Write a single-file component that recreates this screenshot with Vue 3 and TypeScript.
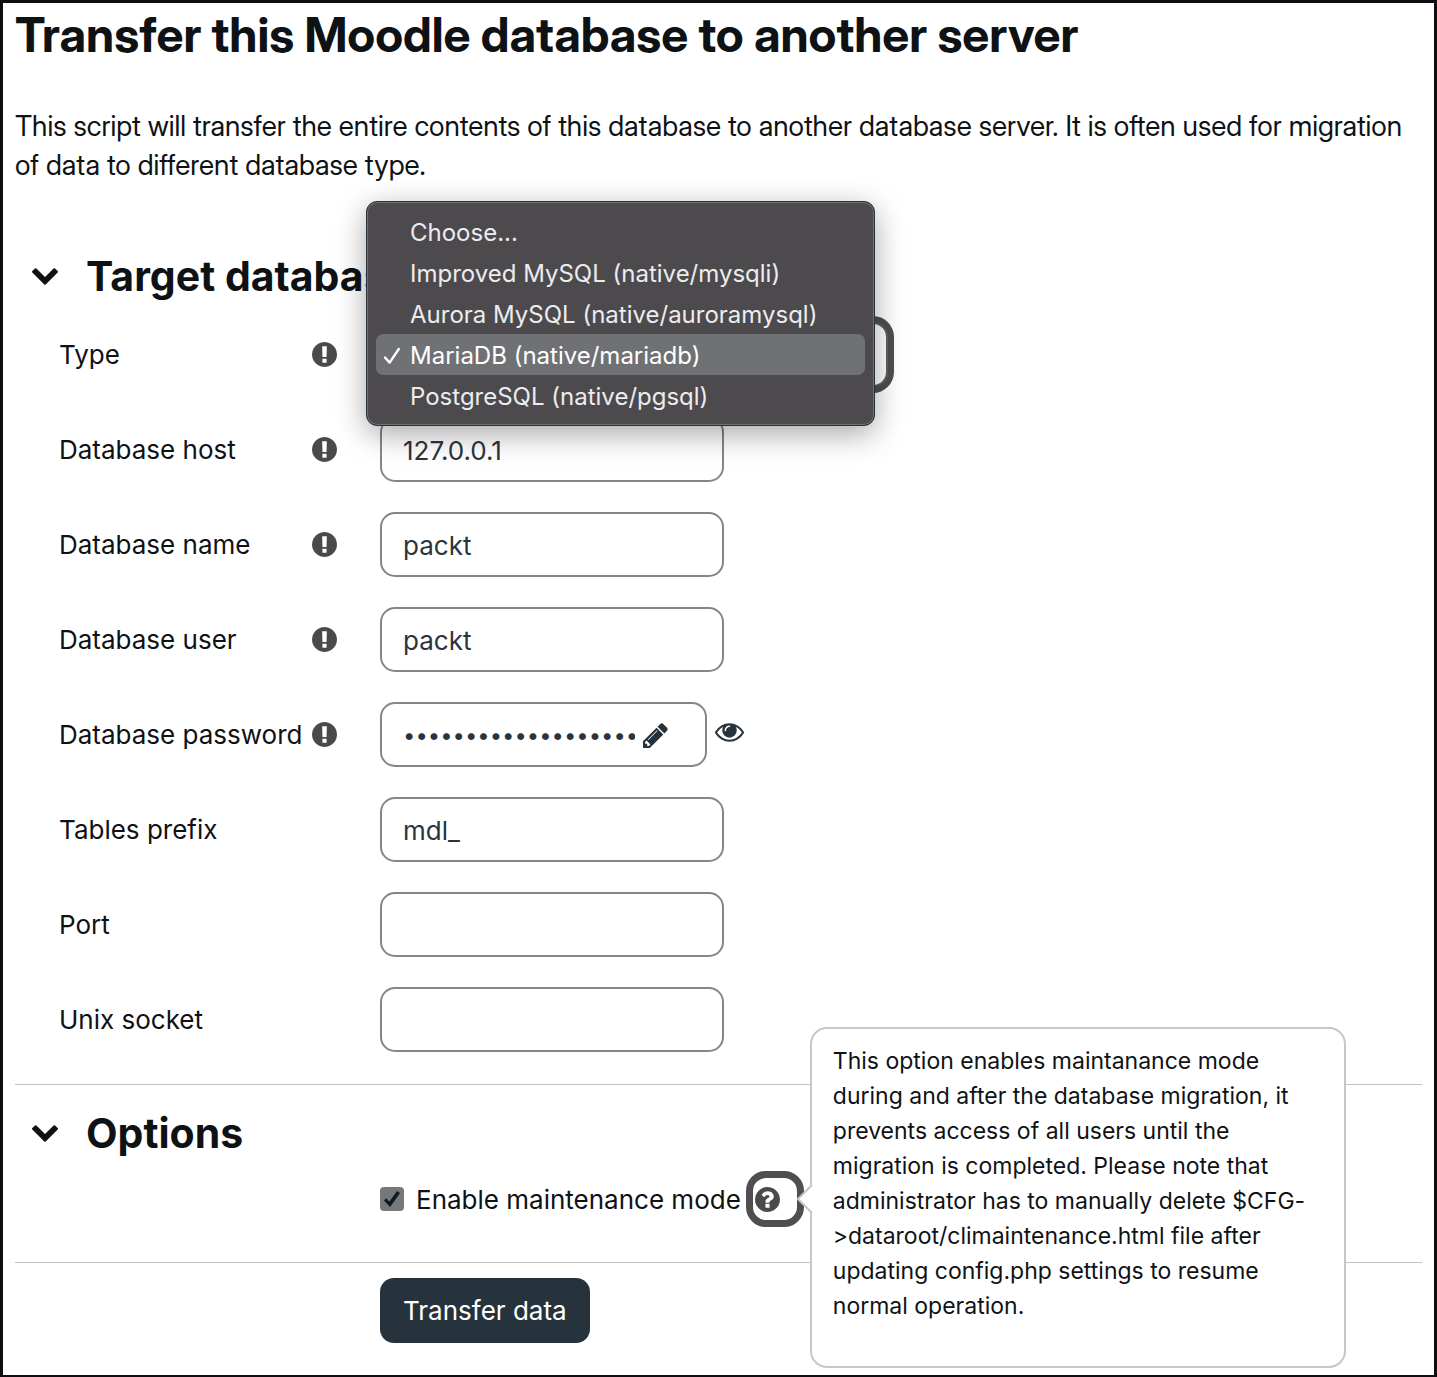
<script setup lang="ts">
import { ref } from 'vue'

interface Field {
  id: string
  label: string
  required: boolean
  kind: 'select' | 'text' | 'password'
}

const fields: Field[] = [
  { id: 'dbtype', label: 'Type', required: true, kind: 'select' },
  { id: 'dbhost', label: 'Database host', required: true, kind: 'text' },
  { id: 'dbname', label: 'Database name', required: true, kind: 'text' },
  { id: 'dbuser', label: 'Database user', required: true, kind: 'text' },
  { id: 'dbpass', label: 'Database password', required: true, kind: 'password' },
  { id: 'prefix', label: 'Tables prefix', required: false, kind: 'text' },
  { id: 'dbport', label: 'Port', required: false, kind: 'text' },
  { id: 'dbsocket', label: 'Unix socket', required: false, kind: 'text' },
]

const values = ref<Record<string, string>>({
  dbtype: 'mariadb',
  dbhost: '127.0.0.1',
  dbname: 'packt',
  dbuser: 'packt',
  dbpass: 'x'.repeat(19),
  prefix: 'mdl_',
  dbport: '',
  dbsocket: '',
})

const drivers = [
  { value: '', label: 'Choose...' },
  { value: 'mysqli', label: 'Improved MySQL (native/mysqli)' },
  { value: 'auroramysql', label: 'Aurora MySQL (native/auroramysql)' },
  { value: 'mariadb', label: 'MariaDB (native/mariadb)' },
  { value: 'pgsql', label: 'PostgreSQL (native/pgsql)' },
]

const maintenance = ref(true)
const targetOpen = ref(true)
const optionsOpen = ref(true)
const revealed = ref(false)
</script>

<template>
  <main class="page">
    <h1>Transfer this Moodle database to another server</h1>
    <p class="intro">
      This script will transfer the entire contents of this database to another database server. It is often used for
      migration of data to different database type.
    </p>

    <form @submit.prevent>
      <section class="section">
        <div class="section-head">
          <button type="button" class="toggle" aria-label="Target database" @click="targetOpen = !targetOpen">
            <svg viewBox="90 533 1612 1035" width="26" height="17">
              <path d="M1683 808l-742 741q-19 19-45 19t-45-19l-742-741q-19-19-19-45.5t19-45.5l166-165q19-19 45-19t45 19l531 531 531-531q19-19 45-19t45 19l166 165q19 19 19 45.5t-19 45.5z" />
            </svg>
          </button>
          <h2>Target database</h2>
        </div>

        <div v-show="targetOpen" class="rows">
          <div v-for="f in fields" :key="f.id" class="row">
            <div class="label-cell">
              <label :for="f.id">{{ f.label }}</label>
              <svg v-if="f.required" class="req" viewBox="128 128 1536 1536" width="25" height="25" role="img" aria-label="Required">
                <path d="M896 128q209 0 385.5 103t279.5 279.5 103 385.5-103 385.5-279.5 279.5-385.5 103-385.5-103-279.5-279.5-103-385.5 103-385.5 279.5-279.5 385.5-103zm128 1247v-190q0-14-9-23.5t-22-9.5h-192q-13 0-23 10t-10 23v190q0 13 10 23t23 10h192q13 0 22-9.5t9-23.5zm-2-344l18-621q0-12-10-18-10-8-24-8h-220q-14 0-24 8-10 6-10 18l17 621q0 10 10 17.5t24 7.5h185q14 0 23.5-7.5t10.5-17.5z" />
              </svg>
            </div>

            <div v-if="f.kind === 'select'" class="select-wrap">
              <select :id="f.id" v-model="values[f.id]" class="control select">
                <option v-for="d in drivers" :key="d.value" :value="d.value">{{ d.label }}</option>
              </select>
              <ul class="menu" role="listbox" aria-label="Type">
                <li
                  v-for="d in drivers"
                  :key="d.value"
                  class="menu-item"
                  :class="{ active: d.value === values.dbtype }"
                  role="option"
                  :aria-selected="d.value === values.dbtype"
                  @click="values.dbtype = d.value"
                >
                  <span class="tick">
                    <svg v-if="d.value === values.dbtype" viewBox="0 0 18 18" width="18" height="18">
                      <path d="M2 10.5L6.6 15.6L15.8 2" fill="none" stroke="#fff" stroke-width="2.4" stroke-linecap="round" stroke-linejoin="round" />
                    </svg>
                  </span>
                  {{ d.label }}
                </li>
              </ul>
            </div>

            <div v-else-if="f.kind === 'password'" class="pw-wrap">
              <div class="control pw-box">
                <input :id="f.id" v-model="values[f.id]" class="pw-input" :type="revealed ? 'text' : 'password'" />
                <button type="button" class="icon-btn" aria-label="Edit password">
                  <svg viewBox="128 128 1536 1536" width="25" height="25">
                    <path d="M491 1536l91-91-235-235-91 91v107h128v128h107zm523-928q0-22-22-22-10 0-17 7l-542 542q-7 7-7 17 0 22 22 22 10 0 17-7l542-542q7-7 7-17zm-54-192l416 416-832 832h-416v-416zm683 96q0 53-37 90l-166 166-416-416 166-165q36-38 90-38 53 0 91 38l235 234q37 39 37 91z" />
                  </svg>
                </button>
              </div>
              <button type="button" class="icon-btn eye" aria-label="Reveal" @click="revealed = !revealed">
                <svg viewBox="0 384 1792 1152" width="29" height="19">
                  <path d="M1664 960q-152-236-381-353 61 104 61 225 0 185-131.5 316.5t-316.5 131.5-316.5-131.5-131.5-316.5q0-121 61-225-229 117-381 353 133 205 333.5 326.5t434.5 121.5 434.5-121.5 333.5-326.5zm-720-384q0-20-14-34t-34-14q-125 0-214.5 89.5t-89.5 214.5q0 20 14 34t34 14 34-14 14-34q0-86 61-147t147-61q20 0 34-14t14-34zm848 384q0 34-20 69-140 230-376.5 368.5t-499.5 138.5-499.5-139-376.5-368q-20-35-20-69t20-69q140-229 376.5-368t499.5-139 499.5 139 376.5 368q20 35 20 69z" />
                </svg>
              </button>
            </div>

            <input v-else :id="f.id" v-model="values[f.id]" class="control text" type="text" />
          </div>
        </div>
      </section>

      <section class="section">
        <div class="section-head">
          <button type="button" class="toggle" aria-label="Options" @click="optionsOpen = !optionsOpen">
            <svg viewBox="90 533 1612 1035" width="26" height="17">
              <path d="M1683 808l-742 741q-19 19-45 19t-45-19l-742-741q-19-19-19-45.5t19-45.5l166-165q19-19 45-19t45 19l531 531 531-531q19-19 45-19t45 19l166 165q19 19 19 45.5t-19 45.5z" />
            </svg>
          </button>
          <h2>Options</h2>
        </div>

        <div v-show="optionsOpen" class="option-row">
          <input id="maintenance" v-model="maintenance" type="checkbox" class="check" />
          <label for="maintenance">Enable maintenance mode</label>
          <div class="help">
            <button type="button" class="help-btn" aria-label="Help with Enable maintenance mode">
              <svg viewBox="128 128 1536 1536" width="25" height="25">
                <path d="M1024 1376v-192q0-14-9-23t-23-9h-192q-14 0-23 9t-9 23v192q0 14 9 23t23 9h192q14 0 23-9t9-23zm256-672q0-88-55.5-163t-138.5-116-170-41q-243 0-371 213-15 24 8 42l132 100q7 6 19 6 16 0 25-12 53-68 86-92 34-24 86-24 48 0 85.5 26t37.5 59q0 38-20 61t-68 45q-63 28-115.5 86.5t-52.5 125.5v36q0 14 9 23t23 9h192q14 0 23-9t9-23q0-19 21.5-49.5t54.5-49.5q32-18 49-28.5t46-35 44.5-48 28-60.5 12.5-81zm384 192q0 209-103 385.5t-279.5 279.5-385.5 103-385.5-103-279.5-279.5-103-385.5 103-385.5 279.5-279.5 385.5-103 385.5 103 279.5 279.5 103 385.5z" />
              </svg>
            </button>
            <div class="popover" role="tooltip">
              <svg class="arrow" viewBox="0 0 16 30" width="16" height="30">
                <path d="M16 0V1L1 15L16 29V30Z" fill="#fff" />
                <path d="M15 1L1 15L15 29" fill="none" stroke="#c6c7c8" stroke-width="2" />
              </svg>
              <p>
                This option enables maintanance mode during and after the database migration, it prevents access of all
                users until the migration is completed. Please note that administrator has to manually delete
                $CFG-&gt;dataroot/climaintenance.html file after updating config.php settings to resume normal
                operation.
              </p>
            </div>
          </div>
        </div>
      </section>

      <div class="actions">
        <button type="submit" class="submit">Transfer data</button>
      </div>
    </form>
  </main>
</template>

<style>
body {
  margin: 0;
  background: #fff;
}
</style>

<style scoped>
* {
  box-sizing: border-box;
}

.page {
  min-height: 100vh;
  padding: 4px 12px 32px;
  border: 3px solid #0d0e11;
  color: #0f1215;
  font-family: Inter, 'Liberation Sans', sans-serif;
  font-size: 26px;
  line-height: 39px;
}

h1 {
  margin: 0;
  font-family: 'Inter Display', Inter, sans-serif;
  font-size: 48px;
  line-height: 56px;
  font-weight: 700;
}

.intro {
  margin: 44px 0 0;
  font-family: 'Inter Display', Inter, sans-serif;
  font-size: 28px;
}

form {
  margin-top: 43px;
}

.section {
  padding: 23px 0 32px;
  border-bottom: 1px solid #c0c1c2;
}

.section-head {
  display: flex;
  align-items: center;
  gap: 28px;
  padding-left: 17px;
}

h2 {
  margin: 0;
  font-size: 41px;
  line-height: 50px;
  font-weight: 700;
}

button {
  padding: 0;
  border: 0;
  background: none;
  color: inherit;
  font: inherit;
  cursor: pointer;
}

svg {
  display: block;
  fill: currentColor;
}

.rows {
  display: flex;
  flex-direction: column;
  gap: 30px;
  padding: 21px 0 0 44px;
}

.row {
  display: grid;
  grid-template-columns: 321px 1fr;
  align-items: center;
  height: 65px;
}

.label-cell {
  display: flex;
  align-items: center;
  justify-content: space-between;
  padding-right: 43px;
}

.req {
  color: #4a494c;
}

.control {
  width: 344px;
  height: 65px;
  padding: 2px 21px 0;
  border: 2px solid #85868a;
  border-radius: 15px;
  background: #fff;
  color: #2b343d;
  font: inherit;
  outline: none;
}

.select-wrap {
  position: relative;
  width: 508px;
}

.select {
  display: block;
  width: 100%;
  border-color: #5f6063;
  appearance: none;
  box-shadow: 0 0 0 6px #4f4e51;
}

.menu {
  position: absolute;
  z-index: 2;
  top: -121px;
  left: -14px;
  width: 509px;
  margin: 0;
  padding: 9px;
  border: 1px solid #27323a;
  border-radius: 11px;
  background: #4c4a4d;
  box-shadow: inset 0 0 0 1px #707174, 0 8px 30px rgba(0, 0, 0, 0.35);
  color: #ececee;
  font-size: 24px;
  line-height: 41px;
  list-style: none;
}

.menu-item {
  display: flex;
  align-items: center;
  height: 41px;
  padding: 2px 0 0 7px;
  border-radius: 7px;
  white-space: nowrap;
}

.menu-item.active {
  background: #707175;
  color: #fff;
}

.tick {
  width: 27px;
}

.pw-wrap {
  display: flex;
  align-items: center;
  gap: 8px;
}

.pw-box {
  display: flex;
  align-items: center;
  gap: 8px;
  width: 327px;
}

.pw-input {
  width: 232px;
  padding: 0;
  border: 0;
  background: none;
  color: inherit;
  font: inherit;
  font-size: 22px;
  outline: none;
}

.icon-btn {
  color: #27333c;
}

.eye {
  padding-bottom: 4px;
}

.option-row {
  display: flex;
  align-items: center;
  height: 56px;
  margin: 13px 0 3px;
  padding-left: 365px;
}

.check {
  display: grid;
  place-content: center;
  width: 24px;
  height: 24px;
  margin: 0 12px 0 0;
  border-radius: 4px;
  background: #77787b;
  appearance: none;
}

.check:checked::before {
  content: '';
  width: 16px;
  height: 16px;
  background: #0f1a22;
  clip-path: polygon(0 60%, 14% 46%, 34% 66%, 82% 0, 100% 12%, 38% 100%);
}

.help {
  position: relative;
  margin-left: 5px;
}

.help-btn {
  display: flex;
  align-items: center;
  width: 58px;
  height: 56px;
  padding-left: 2px;
  border: 7px solid #4f4e51;
  border-radius: 20px;
  color: #4a494c;
}

.popover {
  position: absolute;
  z-index: 1;
  top: -144px;
  left: 64px;
  width: 536px;
  padding: 15px 21px 42px;
  border: 2px solid #c6c7c8;
  border-radius: 17px;
  background: #fff;
  font-size: 23px;
  line-height: 35px;
}

.popover p {
  margin: 0;
}

.arrow {
  position: absolute;
  top: 155px;
  left: -15px;
}

.actions {
  padding: 15px 0 0 365px;
}

.submit {
  height: 65px;
  padding: 0 23px;
  border-radius: 14px;
  background: #27333c;
  color: #fff;
}
</style>
